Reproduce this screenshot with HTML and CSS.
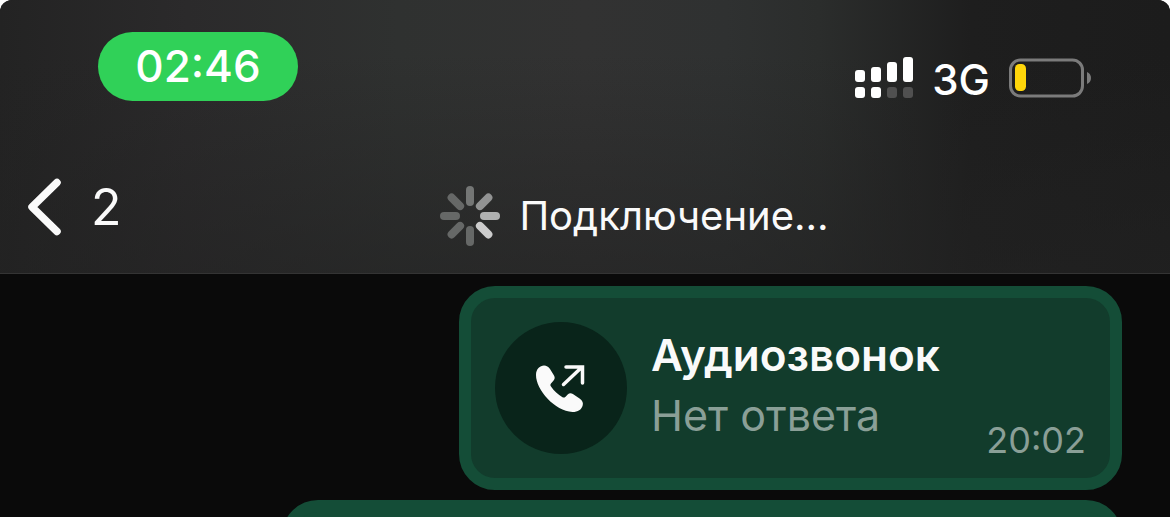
FILE: index.html
```html
<!DOCTYPE html>
<html lang="ru">
<head>
<meta charset="utf-8">
<meta name="viewport" content="width=device-width, initial-scale=1">
<title>Подключение…</title>
<link rel="stylesheet" href="styles.css">
</head>
<body>
<div class="screen">
  <header class="header">
    <div class="status">
      <time class="clock">02:46</time>
      <div class="indicators">
        <svg class="signal" width="58" height="42" viewBox="0 0 58 42" aria-hidden="true">
          <g fill="#fff">
            <rect x="0" y="13" width="10" height="12" rx="3"/>
            <rect x="16" y="10" width="10" height="15" rx="3"/>
            <rect x="32" y="5" width="10" height="20" rx="3"/>
            <rect x="48" y="0" width="10" height="25" rx="3"/>
            <rect x="0" y="30" width="10" height="11" rx="3"/>
            <rect x="16" y="30" width="10" height="11" rx="3"/>
          </g>
          <g fill="#505050">
            <rect x="32" y="30" width="10" height="11" rx="3"/>
            <rect x="48" y="30" width="10" height="11" rx="3"/>
          </g>
        </svg>
        <span class="network">3G</span>
        <svg class="battery" width="82" height="40" viewBox="0 0 82 40" aria-hidden="true">
          <rect x="1.5" y="2" width="72" height="36" rx="10" fill="none" stroke="#7b7b7b" stroke-width="3"/>
          <rect x="6" y="6" width="11" height="27" rx="4.500" fill="#ffd60a"/>
          <path d="M78 14C80.500 15 82 17.300 82 20s-1.500 5-4 6z" fill="#7b7b7b"/>
        </svg>
      </div>
    </div>
    <nav class="nav">
      <button class="back" type="button" aria-label="Назад, 2">
        <svg width="34" height="58" viewBox="0 0 34 58" aria-hidden="true">
          <path d="M30 4.500L5 29l25 24.500" fill="none" stroke="#fafafa" stroke-width="7.500" stroke-linecap="round" stroke-linejoin="round"/>
        </svg>
        <span>2</span>
      </button>
      <div class="connection" role="status">
        <svg width="60" height="60" viewBox="0 0 60 60" stroke-width="8" stroke-linecap="round" aria-hidden="true">
          <path d="M30 4v12" stroke="#747675"/>
          <path d="M30 4v12" stroke="#929393" transform="rotate(45 30 30)"/>
          <path d="M30 4v12" stroke="#b0b1b1" transform="rotate(90 30 30)"/>
          <path d="M30 4v12" stroke="#cccccc" transform="rotate(135 30 30)"/>
          <path d="M30 4v12" stroke="#666867" transform="rotate(180 30 30)"/>
          <path d="M30 4v12" stroke="#666867" transform="rotate(225 30 30)"/>
          <path d="M30 4v12" stroke="#666867" transform="rotate(270 30 30)"/>
          <path d="M30 4v12" stroke="#666867" transform="rotate(315 30 30)"/>
        </svg>
        <span>Подключение…</span>
      </div>
    </nav>
  </header>
  <main class="chat">
    <article class="bubble call">
      <div class="call-icon">
        <svg width="54" height="52" viewBox="0 0 54 52" aria-hidden="true">
          <path d="M2 13C2 7 6 3.500 10 3.500c2.500 0 4.500 1.200 6 3.500l4 6.500c1.200 2 .8 3.500-.6 5.200L17 21.500c-.8 1-.8 1.800 0 3C20 29 24 32.500 28.500 35.200c1 .6 2 .5 2.800-.3l2.400-2.400c1.500-1.400 3.400-1.500 5.200-.4l7 4.600c2.600 1.700 3.600 4.300 2.700 7C47.500 47.500 44 50 38.500 50 21 49 2 28 2 13z" fill="#fafafa"/>
          <path d="M29.500 22.500L48 5M32 5h16.500v16" fill="none" stroke="#fafafa" stroke-width="3.500" stroke-linecap="round" stroke-linejoin="miter"/>
        </svg>
      </div>
      <div class="call-text">
        <h1 class="call-title">Аудиозвонок</h1>
        <p class="call-result">Нет ответа</p>
      </div>
      <time class="call-time">20:02</time>
    </article>
    <article class="bubble next"></article>
  </main>
</div>
</body>
</html>
```

FILE: styles.css
```css
* {
  box-sizing: border-box;
}

html {
  background: #fff;
}

body {
  margin: 0;
  font-family: Inter, "Liberation Sans", sans-serif;
  color: #fafafa;
}

.screen {
  display: flex;
  flex-direction: column;
  height: 100vh;
  overflow: hidden;
  border-radius: 12px 12px 0 0;
  background: #0a0a0a;
}

.header {
  flex: none;
  padding: 32px 27px 19px;
  border-bottom: 1px solid #343434;
  background:
    linear-gradient(to bottom, rgba(34, 34, 34, 0) 20%, rgba(34, 34, 34, 0.6) 100%),
    linear-gradient(to right, #232323 0%, #2b2a2b 16%, #2f3130 34%, #323232 50%, #2f3131 62%, #2b2d2c 70%, #1e1e1e 83%, #1c1c1c 100%);
}

.status {
  display: flex;
  justify-content: space-between;
  align-items: flex-start;
  padding: 0 52px 0 71px;
}

.clock {
  width: 200px;
  border-radius: 35px;
  background: #30d158;
  color: #fff;
  font-size: 44px;
  font-weight: 500;
  line-height: 69px;
  text-align: center;
}

.indicators {
  display: flex;
  align-items: center;
  gap: 19px;
  padding-top: 18px;
  color: #fff;
}

.network {
  padding-top: 4px;
  font-size: 42px;
  font-weight: 500;
  line-height: 52px;
}

.nav {
  display: grid;
  grid-template-columns: 1fr auto 1fr;
  align-items: end;
  padding-top: 72px;
}

.back {
  display: flex;
  align-items: center;
  justify-self: start;
  gap: 30px;
  padding: 0 0 18px;
  border: 0;
  background: none;
  color: inherit;
  font: inherit;
  font-size: 50px;
  line-height: 58px;
}

.connection {
  display: flex;
  align-items: center;
  gap: 19px;
  grid-column: 2;
  padding: 0 0 8px 99px;
  font-size: 40px;
  line-height: 60px;
}

.chat {
  display: flex;
  flex: 1;
  flex-direction: column;
  align-items: flex-end;
  gap: 10px;
  padding: 12px 48px 0;
}

.bubble {
  flex: none;
  max-width: 100%;
  border: 12px solid #144d37;
  border-radius: 36px;
  background: #123c2c;
}

.call {
  display: flex;
  gap: 24px;
  width: 663px;
  padding: 24px;
}

.call-icon {
  display: grid;
  flex: none;
  place-items: center;
  width: 132px;
  height: 132px;
  border-radius: 50%;
  background: #09241a;
}

.call-text {
  flex: 1;
  padding-top: 3px;
}

.call-title,
.call-result {
  margin: 0;
  line-height: 60px;
}

.call-title {
  font-size: 44px;
  font-weight: 600;
}

.call-result {
  color: #8a9f97;
  font-size: 43px;
  font-weight: 400;
}

.call-time {
  align-self: flex-end;
  color: #8a9f97;
  font-size: 36px;
  line-height: 28px;
}

.next {
  width: 840px;
  height: 204px;
  background: #144d37;
}
```
